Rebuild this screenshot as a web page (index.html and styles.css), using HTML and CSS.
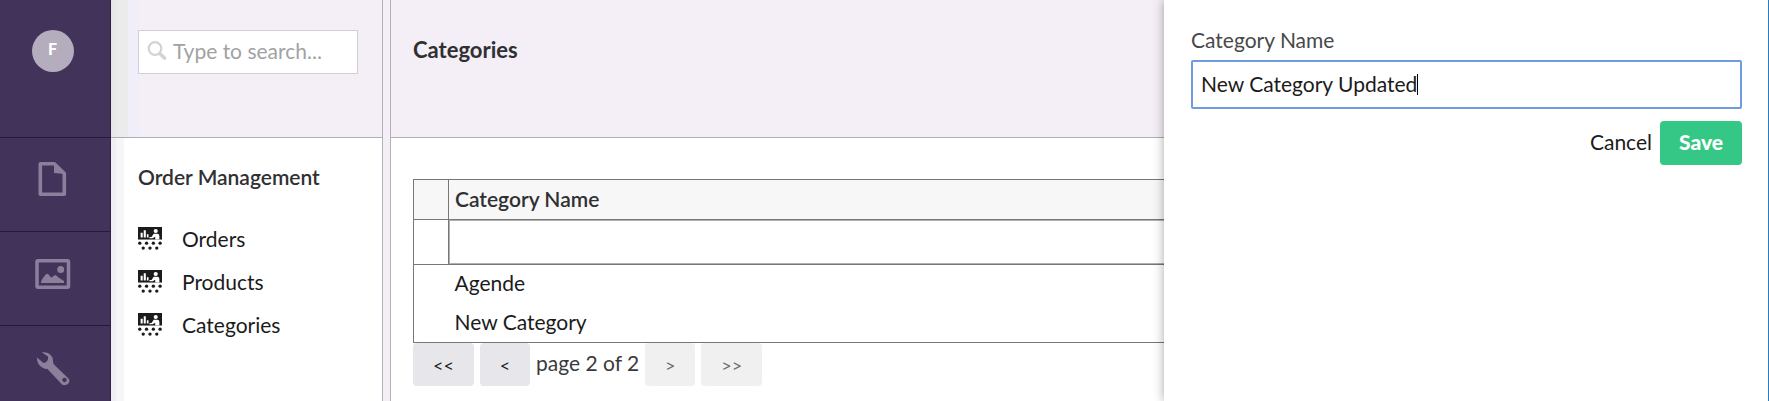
FILE: index.html
```html
<!DOCTYPE html>
<html lang="en">
<head>
<meta charset="utf-8">
<title>Categories</title>
<link rel="stylesheet" href="styles.css">
</head>
<body>
<svg class="sprite" aria-hidden="true">
  <symbol id="icon-lecture" viewBox="0 0 23 22">
    <path fill="#1b1b1b" d="M0 0h23v12H0z"/>
    <path fill="#fff" d="M2.500 5.500h2V10h-2zM5.500 3h2v7h-2zM8.500 7h1.600v3H8.500zM15 3.800a2 2 0 1 1 4 0 2 2 0 0 1-4 0zM15 6.500h3.500q2 0 2 2V12h-4V9.300l-2.500 1.500H11V9.600h2z"/>
    <g fill="#1b1b1b"><circle cx="1.700" cy="15.500" r="1.600"/><circle cx="8.200" cy="15.500" r="1.600"/><circle cx="14.700" cy="15.500" r="1.600"/><circle cx="21.200" cy="15.500" r="1.600"/><circle cx="5" cy="20.200" r="1.600"/><circle cx="11.500" cy="20.200" r="1.600"/><circle cx="18" cy="20.200" r="1.600"/></g>
  </symbol>
</svg>
<div class="app">
  <nav class="rail" aria-label="Sections">
    <div class="rail-user"><button class="avatar" type="button">F</button></div>
    <button class="rail-item" type="button" aria-label="Content">
      <svg width="36" height="36" viewBox="0 0 36 36"><path fill="none" stroke="#8b7f9c" stroke-width="3.600" stroke-linejoin="round" d="M5.300 1.800h14L29.300 11.500v20.700h-24z"/><path fill="#8b7f9c" d="M19 1l12 11-12-1z"/></svg>
    </button>
    <button class="rail-item" type="button" aria-label="Media">
      <svg width="36" height="36" viewBox="0 0 36 36"><rect x="2" y="4.800" width="31.500" height="26.500" rx="1" fill="none" stroke="#8b7f9c" stroke-width="3.500"/><circle cx="25.700" cy="13.500" r="3.500" fill="#8b7f9c"/><path fill="#8b7f9c" d="M6 27c0-3 4-8 5.500-9q2-1 3.500 2.500l1.500 1 3.500-2.500q1.500 0 3.500 2.500l5.500 3.500v2z"/></svg>
    </button>
    <button class="rail-item" type="button" aria-label="Settings">
      <svg width="36" height="36" viewBox="0 0 36 36"><path fill="#8b7f9c" fill-rule="evenodd" d="M7 2.500C12 1.500 18 5 18 10.500q-.300 2.500 1.500 4.500L33 28c4 4-1 9-6 6.500L12.500 19C7 19.500 1.500 14 2 7.500l6.500 5.500c3.500-.500 5-3 4.500-6.500zM29.500 27.800a2.200 2.200 0 1 0 .01 0z"/></svg>
    </button>
  </nav>
  <aside class="tree">
    <header class="bar bar-tree">
      <label class="search">
        <svg width="20" height="20" viewBox="0 0 20 20" aria-hidden="true"><circle cx="8" cy="7.500" r="6.300" fill="none" stroke="#d3d3d3" stroke-width="2.200"/><path stroke="#d3d3d3" stroke-width="3.600" stroke-linecap="round" d="M13.300 13l4.200 4"/></svg>
        <input type="text" placeholder="Type to search..." aria-label="Search">
      </label>
    </header>
    <div class="tree-body">
      <h2>Order Management</h2>
      <ul>
        <li><a href="#orders"><svg width="24" height="23"><use href="#icon-lecture"/></svg>Orders</a></li>
        <li><a href="#products"><svg width="24" height="23"><use href="#icon-lecture"/></svg>Products</a></li>
        <li><a href="#categories"><svg width="24" height="23"><use href="#icon-lecture"/></svg>Categories</a></li>
      </ul>
    </div>
  </aside>
  <div class="splitter"></div>
  <main class="content">
    <header class="bar bar-content"><h1>Categories</h1></header>
    <div class="content-body">
      <table>
        <thead>
          <tr><th class="pick"></th><th scope="col">Category Name</th></tr>
          <tr class="filter"><td></td><td><input type="text" aria-label="Filter by category name"></td></tr>
        </thead>
        <tbody>
          <tr><td></td><td>Agende</td></tr>
          <tr><td></td><td>New Category</td></tr>
        </tbody>
      </table>
      <div class="pager">
        <button class="wide" type="button">&lt;&lt;</button>
        <button type="button">&lt;</button>
        <span>page 2 of 2</span>
        <button type="button" disabled>&gt;</button>
        <button class="wide" type="button" disabled>&gt;&gt;</button>
      </div>
    </div>
  </main>
  <form class="drawer">
    <label for="name">Category Name</label>
    <div class="field">
      <input id="name" type="text" value="New Category Updated">
      <span class="caret"></span>
    </div>
    <div class="actions">
      <button class="cancel" type="button">Cancel</button>
      <button class="save" type="button">Save</button>
    </div>
  </form>
</div>
</body>
</html>
```
FILE: styles.css
```css
* { box-sizing: border-box; }
body { margin: 0; font: 21px/28px Lato, sans-serif; color: #1b1b1b; background: #fff; }
button, input { font: inherit; color: inherit; margin: 0; }
button { border: 0; }
h1, h2 { margin: 0; font-size: 21px; line-height: 28px; font-weight: 600; color: #303033; }
h1 { font-size: 22px; font-weight: 700; }
.sprite { display: none; }

.app { position: relative; display: flex; height: 100vh; overflow: hidden; }

.rail { flex: none; width: 111px; background: #413359; border-right: 1px solid #2b1f42; }
.rail-user { height: 138px; padding: 30px 5px 0 0; border-bottom: 1px solid #251a3c; text-align: center; }
.avatar { width: 42px; height: 42px; padding: 0 0 4px; border-radius: 50%; background: #b3adbd; color: #fff; font: 900 16px/20px Lato, sans-serif; }
.rail-item { display: block; width: 100%; height: 94px; padding: 24px 5px 34px 0; background: none; border-bottom: 1px solid #251a3c; }
.rail-item svg { display: block; margin: 0 auto; }

.bar { height: 138px; background: #f4eef6; border-bottom: 1px solid #aeaeb2; }
.tree { flex: none; width: 272px; border-right: 1px solid #b4b2b8; background: linear-gradient(to right, #f0edf5 5px, #f6f6f8 5px 13px, #fff 13px); }
.bar-tree { padding: 30px 24px 0 27px; background: linear-gradient(to right, #e4e3e6, #ebebec 7px 16px, #f0eef8 18px 27px, #f4eef6 28px); }
.search { display: flex; align-items: center; gap: 6px; height: 44px; padding: 0 8px 2px; background: #fff; border: 1px solid #d2ced4; }
.search svg { flex: none; }
.search input { flex: 1; min-width: 0; padding: 0; border: 0; outline: 0; background: none; }
.search input::placeholder { color: #a2a2a2; opacity: 1; }
.tree-body { padding: 25px 24px 0 27px; }
.tree ul { list-style: none; margin: 26px 0 0; padding: 0; }
.tree li a { display: flex; align-items: center; gap: 20px; height: 43px; color: #1b1b1b; text-decoration: none; }

.splitter { flex: none; width: 8px; background: #f4eef6; border-right: 1px solid #b4b2b8; }

.content { flex: 1; min-width: 0; }
.bar-content { padding: 36px 22px 0; }
.content-body { padding: 41px 22px 0; }
table { width: 100%; border-collapse: collapse; border: 1px solid #77777a; table-layout: fixed; }
th, td { padding: 0 6px 2px; text-align: left; }
th { height: 40px; background: #f7f7f7; border: 1px solid #77777a; font-weight: 600; color: #303033; }
.pick { width: 35px; }
.filter td { height: 45px; padding: 0; border: 1px solid #77777a; }
.filter input { display: block; width: 100%; height: 44px; padding: 0 6px; border: 1px solid #b0b0b3; background: #fff; }
tbody td { height: 39px; }
.pager { display: flex; align-items: flex-start; gap: 6px; color: #3a3a3c; }
.pager span { padding-top: 6px; }
.pager button { width: 50px; height: 43px; padding: 0; border-radius: 4px; background: #e7e6ea; color: #1b1b1b; font-size: 18px; }
.pager .wide { width: 61px; }
.pager button:disabled { background: #f0f0f0; color: #6a6a6c; }

.drawer { position: absolute; top: 0; right: 0; bottom: 0; width: 605px; padding: 26px 26px 0 27px; background: #fff; border-right: 1px solid #2a7cc0; box-shadow: 0 0 10px rgba(0, 0, 0, .35); }
.drawer label { display: block; color: #48484a; }
.field { position: relative; margin-top: 6px; }
.field input { display: block; width: 100%; height: 49px; padding: 0 8px 3px; border: 2px solid #6f9be0; border-radius: 2px; outline: 0; color: #1b1b1b; }
.caret { position: absolute; top: 14px; left: 226px; width: 1px; height: 21px; background: #000; }
.actions { display: flex; justify-content: flex-end; align-items: center; gap: 8px; margin-top: 12px; }
.cancel { padding: 0 0 2px; background: none; }
.save { width: 82px; height: 44px; padding: 0 0 2px; border-radius: 4px; background: #35c786; color: #fff; font-weight: 900; }
```
